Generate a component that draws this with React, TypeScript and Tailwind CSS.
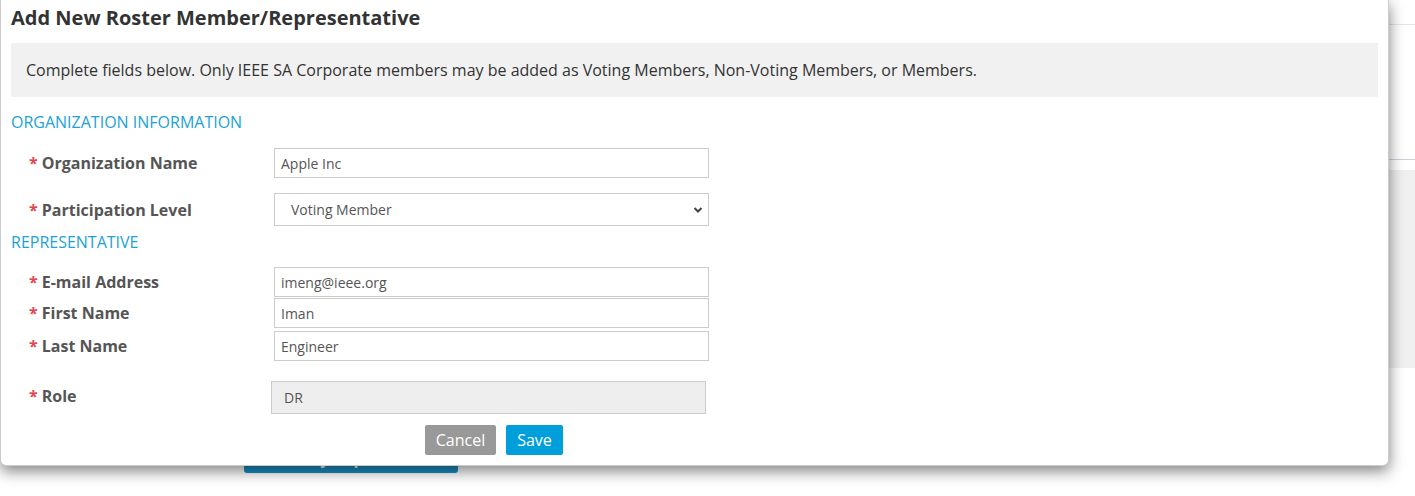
import React from "react";

const font = { fontFamily: '"Open Sans", "Noto Sans", Arial, sans-serif' };

function Label({ text }: { text: string }) {
  return (
    <div className="w-[263px] pl-[18px] flex items-center text-[16px] font-bold text-[#555] leading-[20px]">
      <span className="text-[#e0474c] mr-[4px]">*</span>
      <span>{text}</span>
    </div>
  );
}

function TextRow({ label, value, mt }: { label: string; value: string; mt: string }) {
  return (
    <div className={`flex items-center ${mt}`}>
      <Label text={label} />
      <div className="w-[435px] h-[30px] border border-[#cccccc] bg-white flex items-center pl-[6px] text-[14px] text-[#555]">
        {value}
      </div>
    </div>
  );
}

export default function App() {
  return (
    <div className="relative w-[1415px] h-[496px] bg-white overflow-hidden" style={font}>
      {/* background page */}
      <div className="flex flex-col">
        <div className="h-[25px] border-b border-[#e6e6e6]" />
        <div className="h-[135px] border-b border-[#c9d1d9]" />
        <div className="mt-[10px] h-[198px] bg-[#f0f0f0]" />
        <div className="h-[126px] flex items-end pb-[21px]">
          <span className="w-[40px] ml-[2px] mb-[7px] text-[15px] text-[#333] leading-[20px]">Key</span>
          <div className="ml-[202px] w-[214px] h-[30px] bg-[#1a8fc4] rounded-[3px] text-white font-bold text-[16px] flex items-center justify-center">
            Add Entity Representative
          </div>
        </div>
      </div>

      {/* modal */}
      <div className="absolute left-0 top-0 w-[1389px] bg-white border border-t-0 border-[rgba(0,0,0,0.2)] rounded-b-[6px] shadow-[0_5px_15px_rgba(0,0,0,0.5)] pl-[10px] pr-[10px] pt-[5px] pb-[10px]">
        <div className="text-[20px] font-bold text-[#333] leading-[26px]">Add New Roster Member/Representative</div>
        <div className="mt-[12px] h-[54px] bg-[#f1f1f1] flex items-center pl-[15px] text-[16px] text-[#333]">
          Complete fields below. Only IEEE SA Corporate members may be added as Voting Members, Non-Voting Members, or Members.
        </div>
        <div className="mt-[14px] text-[16px] leading-[22px] text-[#1ba2d8]">ORGANIZATION INFORMATION</div>
        <TextRow label="Organization Name" value="Apple Inc" mt="mt-[15px]" />
        <div className="flex items-center mt-[15px]">
          <Label text="Participation Level" />
          <div className="relative w-[435px] h-[33px] border border-[#cccccc] bg-white flex items-center pl-[16px] text-[14px] text-[#555]">
            Voting Member
            <svg className="absolute right-[5px] top-[12px]" width="10" height="8" viewBox="0 0 10 8">
              <path d="M1.5 2 L5 5.5 L8.5 2" fill="none" stroke="#444" strokeWidth="2" />
            </svg>
          </div>
        </div>
        <div className="mt-[5px] text-[16px] leading-[22px] text-[#1ba2d8]">REPRESENTATIVE</div>
        <TextRow label="E-mail Address" value="imeng@ieee.org" mt="mt-[14px]" />
        <TextRow label="First Name" value="Iman" mt="mt-[1px]" />
        <TextRow label="Last Name" value="Engineer" mt="mt-[3px]" />
        <div className="flex items-center mt-[20px]">
          <div className="w-[260px] self-start pt-[5px]">
            <div className="pl-[18px] flex items-center text-[16px] font-bold text-[#555] leading-[20px]">
              <span className="text-[#e0474c] mr-[4px]">*</span>
              <span>Role</span>
            </div>
          </div>
          <div className="w-[435px] h-[33px] border border-[#cccccc] bg-[#eeeeee] flex items-center pl-[12px] text-[14px] text-[#555]">
            DR
          </div>
        </div>
        <div className="flex mt-[11px] ml-[414px] gap-[10px]">
          <div className="w-[71px] h-[30px] bg-[#999999] rounded-[2px] text-white text-[16px] flex items-center justify-center">Cancel</div>
          <div className="w-[57px] h-[30px] bg-[#009fdb] rounded-[2px] text-white text-[16px] flex items-center justify-center">Save</div>
        </div>
      </div>
    </div>
  );
}
